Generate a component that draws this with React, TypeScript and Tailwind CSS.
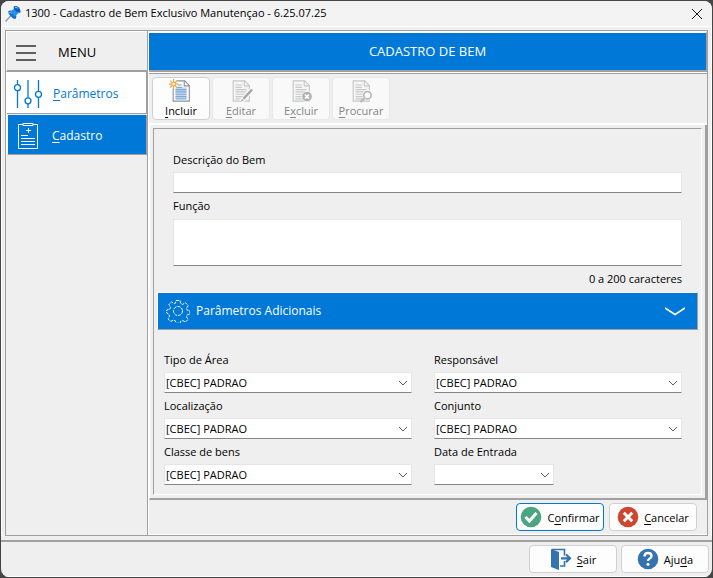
import type { ReactNode } from 'react';

// "C[o]nfirmar" -> the letter in brackets is the access key
const KeyLabel = ({ text }: { text: string }) => {
  const [before, rest] = text.split('[');
  const [key, after] = rest.split(']');
  return (
    <span className="whitespace-nowrap">
      {before}
      <span className="underline underline-offset-2">{key}</span>
      {after}
    </span>
  );
};

const PinIcon = () => (
  <svg width="18" height="18" viewBox="0 0 18 18" aria-hidden="true">
    <path d="M1.500 16.500L7 10.500" stroke="#8a98a8" strokeWidth="1.300" />
    <path d="M4 6.500q3-2 5 .5l2 2q2.500 2 .5 5q-2.500 0-4.500-2.500q-2.500-2-3-5z" fill="#0f6fd0" />
    <path d="M6.500 7l3.500-3.500l4.500 4.500l-3.500 3.500z" fill="#2a90ee" />
    <path d="M9.500 1.500q3.500-1.500 5.500 1t1.500 5q-3 1-5-1.500t-2-4.500z" fill="#0a5fc4" />
    <path d="M11 2.500q2-.5 3 .8" stroke="#8cc8ff" strokeWidth="1" fill="none" />
    <path d="M5 7.500q1.500-.5 2.500.8" stroke="#8cc8ff" strokeWidth="1" fill="none" />
  </svg>
);

const SlidersIcon = () => (
  <svg width="28" height="28" viewBox="0 0 28 28" fill="none" stroke="currentColor" aria-hidden="true">
    <path d="M3.500 0v4.500M3.500 11v17M14 0v17.500M14 24v4M24.500 0v11M24.500 17.500v10.500" strokeWidth="1.300" />
    <circle cx="3.500" cy="7.700" r="3" strokeWidth="1.300" />
    <circle cx="14" cy="20.800" r="3" strokeWidth="1.300" />
    <circle cx="24.500" cy="14.300" r="3" strokeWidth="1.300" />
  </svg>
);

const ClipboardIcon = () => (
  <svg width="22" height="28" viewBox="0 0 22 28" fill="none" stroke="currentColor" aria-hidden="true">
    <path d="M6 2.500H1.500v24h19v-24H16M6 1.500h10v2H6zM11.500 6v5M9 8.500h5M4 13.500h7M4 16.500h14M4 19.500h14M4 22.500h14" />
  </svg>
);

const GearIcon = () => (
  <svg width="24" height="24" viewBox="0 0 24 24" fill="none" stroke="currentColor" aria-hidden="true">
    <path
      strokeDasharray="3 1"
      d="M10 1.500h4l.7 3 2 .9 2.700-1.700 2.800 2.800-1.700 2.700.8 2 2.700.8v3l-2.700.8-.9 2 1.700 2.500-2.700 2.700-2.700-1.500-2 .8-.7 2h-4l-.7-2.500-2-.8-2.500 1.500-2.800-2.700 1.600-2.600-.8-2L.7 14v-3l3-.7.8-2L2.900 5.600l2.700-2.700 2.700 1.700 1.200-.5z"
    />
    <circle cx="12" cy="12" r="4.500" strokeDasharray="3 1" />
  </svg>
);

type DocKind = 'new' | 'edit' | 'delete' | 'search';

const DocIcon = ({ kind }: { kind: DocKind }) => {
  const isNew = kind === 'new';
  const line = isNew ? '#8c9196' : '#c6c6c6';
  const rows = isNew ? '#7fa8d4' : '#c9c9c9';
  return (
    <svg width="26" height="26" viewBox="0 0 26 26" fill="none" aria-hidden="true">
      <path d="M4.500 2h12.500l5 5v17H4.500z" fill={isNew ? '#fff' : '#f6f6f6'} stroke={line} strokeWidth="1.200" />
      <path d="M16.500 2v5.500H22" stroke={line} strokeWidth="1.200" />
      {isNew && <path d="M7 9h12v12H7z" fill="#c4d9ef" />}
      <path d="M7 6.500h7M7 9h7M7 11.500h12M7 14h12M7 16.500h12M7 19h12M7 21.500h12" stroke={rows} strokeWidth="1.300" />
      {kind === 'new' && (
        <>
          <circle cx="5" cy="5.500" r="5" fill="#fdfdfd" />
          <path d="M5 0v11M0 5.500h10.500M1.200 1.700l7.600 7.600M8.800 1.700L1.200 9.300" stroke="#eda844" strokeWidth="1.300" />
          <circle cx="5" cy="5.500" r="2" fill="#fff" stroke="#eda844" strokeWidth="1.200" />
        </>
      )}
      {kind === 'edit' && (
        <>
          <path d="M13 24.500L25 11.500" stroke="#fafafa" strokeWidth="5" />
          <path d="M15.500 21.500L25 11.500" stroke="#a8a8a8" strokeWidth="2.600" />
          <path d="M13 24.500l1-3 2 2z" fill="#a8a8a8" />
        </>
      )}
      {kind === 'delete' && (
        <>
          <circle cx="19.500" cy="19" r="5.700" fill="#b0b0b0" stroke="#fafafa" />
          <path d="M17.300 16.800l4.400 4.400M21.700 16.800l-4.400 4.400" stroke="#fff" strokeWidth="1.800" />
        </>
      )}
      {kind === 'search' && (
        <>
          <circle cx="20" cy="17.500" r="5.500" fill="#fafafa" />
          <path d="M12.500 25l4-4" stroke="#b5b5b5" strokeWidth="2.200" />
          <circle cx="20" cy="17.500" r="4" stroke="#b5b5b5" strokeWidth="1.700" />
        </>
      )}
    </svg>
  );
};

const CheckIcon = () => (
  <svg width="22" height="22" viewBox="0 0 22 22" fill="none" aria-hidden="true">
    <circle cx="11" cy="11" r="10.300" fill="#4ba583" />
    <path d="M5.500 11l4 4 7-8" stroke="#fff" strokeWidth="3" />
  </svg>
);

const CrossIcon = () => (
  <svg width="22" height="22" viewBox="0 0 22 22" fill="none" aria-hidden="true">
    <circle cx="11" cy="11" r="10.300" fill="#cc4630" />
    <path d="M6.800 6.800l8.400 8.400M15.200 6.800l-8.400 8.400" stroke="#fff" strokeWidth="3" />
  </svg>
);

const ExitIcon = () => (
  <svg width="22" height="22" viewBox="0 0 22 22" fill="none" aria-hidden="true">
    <path d="M1 1l8 3v18l-8-3z" fill="#3572b0" />
    <path d="M2 1.500h12.500v6M10 18h4.500v-5" stroke="#3572b0" strokeWidth="1.600" />
    <path d="M11 10.300h8M16 6.500l4 3.800-4 3.800" stroke="#3572b0" strokeWidth="2.200" />
  </svg>
);

const HelpIcon = () => (
  <svg width="22" height="22" viewBox="0 0 22 22" fill="none" aria-hidden="true">
    <circle cx="11" cy="11" r="10.300" fill="#3572b0" />
    <path d="M7.500 8.500q0-3.500 3.500-3.500t3.500 3q0 1.700-2 2.700-1.500.8-1.500 2.300" stroke="#fff" strokeWidth="2.400" />
    <circle cx="11" cy="16.200" r="1.500" fill="#fff" />
  </svg>
);

const tools: { label: string; kind: DocKind; disabled: boolean }[] = [
  { label: '[I]ncluir', kind: 'new', disabled: false },
  { label: '[E]ditar', kind: 'edit', disabled: true },
  { label: 'E[x]cluir', kind: 'delete', disabled: true },
  { label: '[P]rocurar', kind: 'search', disabled: true },
];

const combos = [
  { id: 'tipo', label: 'Tipo de Área', value: '[CBEC] PADRAO' },
  { id: 'responsavel', label: 'Responsável', value: '[CBEC] PADRAO' },
  { id: 'localizacao', label: 'Localização', value: '[CBEC] PADRAO' },
  { id: 'conjunto', label: 'Conjunto', value: '[CBEC] PADRAO' },
  { id: 'classe', label: 'Classe de bens', value: '[CBEC] PADRAO' },
  { id: 'entrada', label: 'Data de Entrada', value: '' },
];

const Combo = ({ id, label, value }: { id: string; label: string; value: string }) => (
  <div className="flex flex-col gap-1">
    <label htmlFor={id} className="leading-4">{label}</label>
    <div className={value ? 'relative' : 'relative w-[120px]'}>
      <select
        id={id}
        defaultValue={value}
        className="block h-[21px] w-full appearance-none border border-[#e6e6e6] border-b-[#868686] bg-white pl-px leading-4"
      >
        <option value={value}>{value}</option>
      </select>
      <svg
        className="pointer-events-none absolute top-2 right-1"
        width="10"
        height="6"
        viewBox="0 0 10 6"
        fill="none"
        stroke="#5c5c5c"
        aria-hidden="true"
      >
        <path d="M1 1l4 4 4-4" />
      </svg>
    </div>
  </div>
);

const ActionButton = ({ icon, label, primary }: { icon: ReactNode; label: string; primary?: boolean }) => (
  <button
    type="button"
    className={`flex h-7 w-[88px] items-center justify-center gap-[5px] rounded border bg-[#fdfdfd] ${
      primary ? 'border-[#0078d4]' : 'border-[#d0d0d0]'
    }`}
  >
    {icon}
    <span className="pt-[2px]">
      <KeyLabel text={label} />
    </span>
  </button>
);

export default function App() {
  return (
    <div className="flex min-h-screen flex-col bg-[#454545] p-px font-['Open_Sans','Noto_Sans',sans-serif] text-[11px] text-black">
      <div className="flex flex-1 flex-col overflow-hidden rounded-lg bg-[#efefef]">
        <header className="flex h-[25px] items-center bg-[#f3f3f3] pr-2 pl-[3px]">
          <PinIcon />
          <h1 className="ml-[3px] flex-1 whitespace-nowrap">1300 - Cadastro de Bem Exclusivo Manutençao - 6.25.07.25</h1>
          <button type="button" aria-label="Fechar" className="p-px">
            <svg width="12" height="12" viewBox="0 0 12 12" stroke="#1a1a1a" aria-hidden="true">
              <path d="M1 1l10 10M11 1L1 11" />
            </svg>
          </button>
        </header>

        <div className="flex flex-1 flex-col border-t border-r border-l border-white px-[3px] pt-[3px]">
          <div className="flex flex-1 border border-[#a0a0a0]">
            <aside className="w-[142px] shrink-0 border-r border-[#a0a0a0]">
              <div className="flex h-[41px] items-center border-t border-b-2 border-l border-t-white border-b-[#a0a0a0] border-l-white pt-[3px] pl-[9px] text-[13px]">
                <button type="button" aria-label="Menu">
                  <svg width="20" height="18" viewBox="0 0 20 18" stroke="#606060" strokeWidth="2" aria-hidden="true">
                    <path d="M0 2h20M0 9h20M0 16h20" />
                  </svg>
                </button>
                <span className="ml-[22px]">MENU</span>
              </div>
              <nav className="border-l border-white text-xs">
                <a href="#parametros" className="flex h-[42px] items-center border-r border-b border-[#a0a0a0] bg-white pt-[3px] pl-[7px] text-[#0078d7]">
                  <SlidersIcon />
                  <span className="ml-[11px]"><KeyLabel text="[P]arâmetros" /></span>
                </a>
                <a href="#cadastro" className="mt-px flex h-10 items-center border-r border-b border-l border-[#a0a0a0] border-l-white bg-[#0078d7] pt-[2px] pl-[9px] text-white">
                  <ClipboardIcon />
                  <span className="ml-[13px]"><KeyLabel text="[C]adastro" /></span>
                </a>
              </nav>
            </aside>

            <main className="flex min-w-0 flex-1 flex-col border-l border-white">
              <h2 className="flex h-[41px] items-center justify-center border-t-2 border-r border-b-2 border-t-white border-r-[#a0a0a0] border-b-[#a0a0a0] bg-[#0078d7] pt-px text-[13px] text-white">
                CADASTRO DE BEM
              </h2>

              <div className="border-t border-white">
                <div className="flex gap-[2px] border-t border-b-2 border-t-[#a0a0a0] border-b-white p-[3px]">
                  {tools.map((tool) => (
                    <button
                      key={tool.kind}
                      type="button"
                      disabled={tool.disabled}
                      className={`flex h-[43px] w-[58px] flex-col items-center rounded border pt-px leading-4 ${
                        tool.disabled ? 'border-[#e8e8e8] bg-[#f9f9f9] text-[#858585]' : 'border-[#d0d0d0] bg-[#fdfdfd]'
                      }`}
                    >
                      <DocIcon kind={tool.kind} />
                      <KeyLabel text={tool.label} />
                    </button>
                  ))}
                </div>
              </div>

              <form className="flex flex-1 flex-col">
                <div className="flex-1 border-r-2 border-b-2 border-l border-r-[#a0a0a0] border-b-[#a0a0a0] border-l-white p-[3px]">
                  <div className="h-full border-t border-r border-b border-l border-t-[#a0a0a0] border-r-white border-b-white border-l-[#a0a0a0]">
                    <div className="flex flex-col px-[19px] pt-[23px]">
                      <label htmlFor="descricao" className="leading-4">Descrição do Bem</label>
                      <input
                        id="descricao"
                        type="text"
                        className="mt-1 h-[21px] border border-[#e6e6e6] border-b-[#868686] bg-white px-1"
                      />
                      <label htmlFor="funcao" className="mt-[5px] leading-4">Função</label>
                      <textarea
                        id="funcao"
                        maxLength={200}
                        className="mt-[5px] h-[47px] resize-none border border-[#e6e6e6] border-b-[#868686] bg-white px-1"
                      />
                      <p className="mt-[5px] text-right leading-4">0 a 200 caracteres</p>
                    </div>

                    <div className="mt-[5px] px-[3px]">
                      <button
                        type="button"
                        className="flex h-[38px] w-full items-center border border-t-white border-r-[#a0a0a0] border-b-[#a0a0a0] border-l-white bg-[#0078d7] px-2 text-xs text-white"
                      >
                        <GearIcon />
                        <span className="ml-[6px]">Parâmetros Adicionais</span>
                        <svg className="mr-1 ml-auto" width="20" height="9" viewBox="0 0 20 9" fill="none" stroke="#fff" strokeWidth="1.500" aria-hidden="true">
                          <path d="M0 1l10 6.500L20 1" />
                        </svg>
                      </button>
                    </div>

                    <div className="grid grid-cols-2 gap-x-[22px] gap-y-[5px] pt-[22px] pr-[19px] pb-[7px] pl-[10px]">
                      {combos.map((combo) => (
                        <Combo key={combo.id} {...combo} />
                      ))}
                    </div>
                  </div>
                </div>

                <div className="flex justify-end gap-[5px] border-b border-white py-[3px] pr-[10px]">
                  <ActionButton icon={<CheckIcon />} label="C[o]nfirmar" primary />
                  <ActionButton icon={<CrossIcon />} label="[C]ancelar" />
                </div>
              </form>
            </main>
          </div>
        </div>

        <footer className="mt-1 flex justify-end gap-1 border-t-2 border-b border-t-[#a0a0a0] border-b-white pt-[3px] pr-[3px] pb-[3px]">
          <ActionButton icon={<ExitIcon />} label="[S]air" />
          <ActionButton icon={<HelpIcon />} label="Aju[d]a" />
        </footer>
      </div>
    </div>
  );
}
